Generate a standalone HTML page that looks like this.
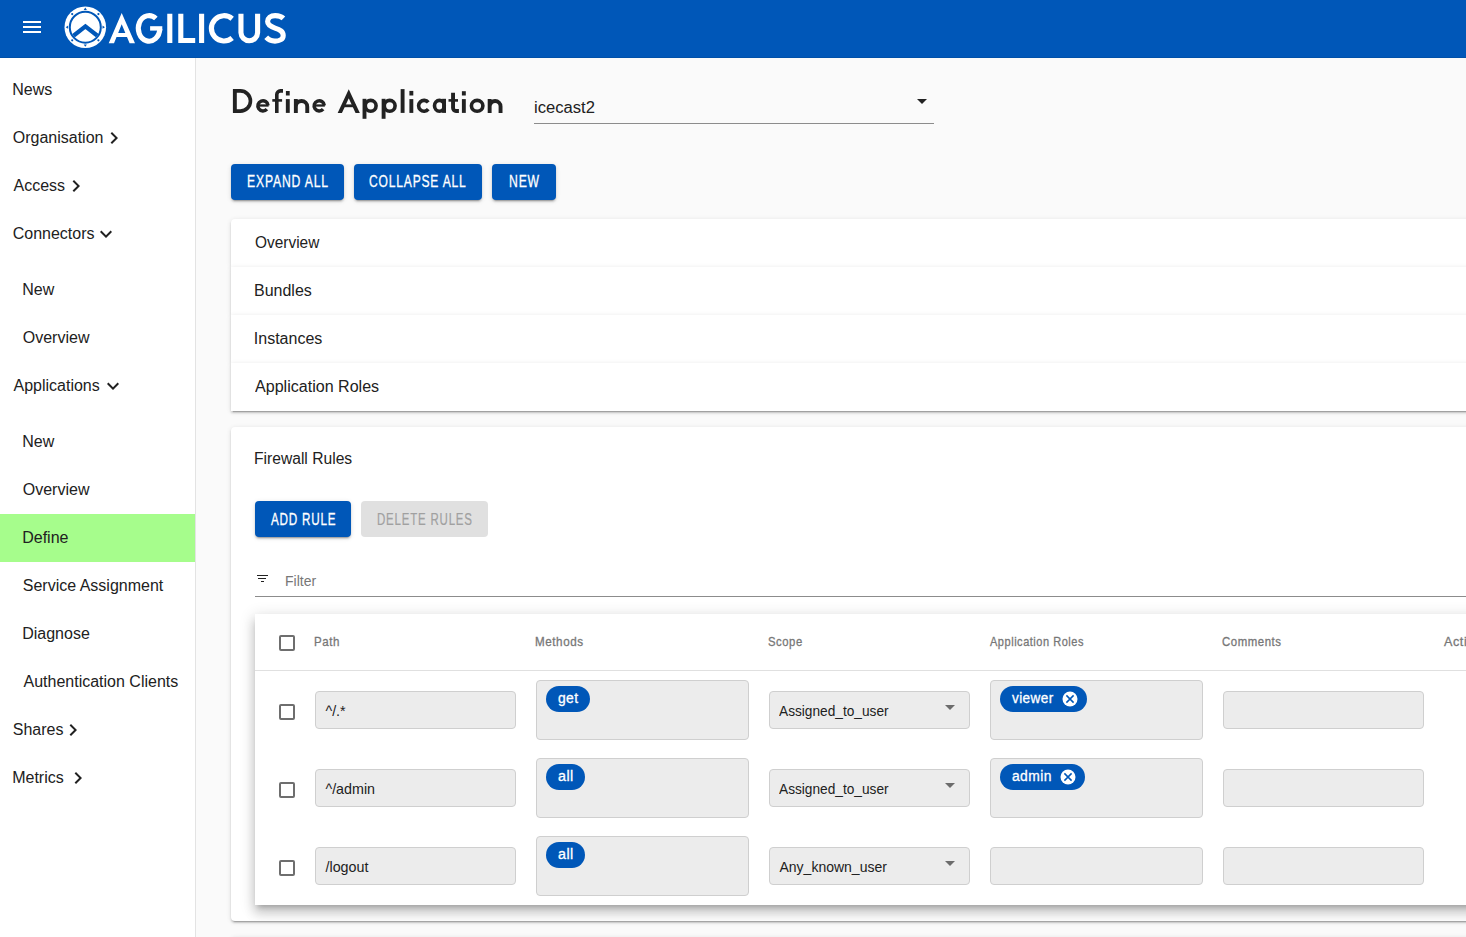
<!DOCTYPE html>
<html><head><meta charset="utf-8"><style>
html,body{margin:0;padding:0;width:1466px;height:937px;overflow:hidden;background:#fafafa;}
body{position:relative;font-family:"Liberation Sans",sans-serif;}
.t{position:absolute;line-height:1;white-space:nowrap;}
.r{position:absolute;box-sizing:border-box;}
svg{position:absolute;}
</style></head><body>
<div class="r" style="left:231px;top:219px;width:1300px;height:48px;background:#fff;border-radius:4px 4px 0 0;box-shadow:0 3px 1px -2px rgba(0,0,0,.2),0 2px 2px 0 rgba(0,0,0,.14),0 1px 5px 0 rgba(0,0,0,.12);"></div>
<div class="r" style="left:231px;top:267px;width:1300px;height:48px;background:#fff;box-shadow:0 3px 1px -2px rgba(0,0,0,.2),0 2px 2px 0 rgba(0,0,0,.14),0 1px 5px 0 rgba(0,0,0,.12);"></div>
<div class="r" style="left:231px;top:315px;width:1300px;height:48px;background:#fff;box-shadow:0 3px 1px -2px rgba(0,0,0,.2),0 2px 2px 0 rgba(0,0,0,.14),0 1px 5px 0 rgba(0,0,0,.12);"></div>
<div class="r" style="left:231px;top:363px;width:1300px;height:48px;background:#fff;box-shadow:0 3px 1px -2px rgba(0,0,0,.2),0 2px 2px 0 rgba(0,0,0,.14),0 1px 5px 0 rgba(0,0,0,.12);"></div>
<div class="r" style="left:231px;top:427px;width:1300px;height:494px;background:#fff;border-radius:4px;overflow:hidden;box-shadow:0 3px 1px -2px rgba(0,0,0,.2),0 2px 2px 0 rgba(0,0,0,.14),0 1px 5px 0 rgba(0,0,0,.12);">
<div class="r" style="left:24px;top:187px;width:1300px;height:291px;background:#fff;box-shadow:0 5px 5px -3px rgba(0,0,0,.2),0 8px 10px 1px rgba(0,0,0,.14),0 3px 14px 2px rgba(0,0,0,.12);"></div>
</div>
<div class="r" style="left:231px;top:937px;width:1300px;height:100px;background:#fff;border-radius:4px;box-shadow:0 3px 1px -2px rgba(0,0,0,.2),0 2px 2px 0 rgba(0,0,0,.14),0 1px 5px 0 rgba(0,0,0,.12);"></div>
<div class="r" style="left:0px;top:0px;width:1466px;height:58px;background:#0057b8;border-bottom:1px solid #0050a8;"></div>
<div class="r" style="left:23px;top:21px;width:18px;height:2px;background:#fff;"></div>
<div class="r" style="left:23px;top:26px;width:18px;height:2px;background:#fff;"></div>
<div class="r" style="left:23px;top:31px;width:18px;height:2px;background:#fff;"></div>
<svg style="left:0;top:0" width="300" height="58" viewBox="0 0 300 58">
<defs><clipPath id="ic"><circle cx="85.3" cy="27.2" r="14.6"/></clipPath>
<clipPath id="capc"><rect x="100" y="13.8" width="200" height="29.3"/></clipPath></defs>
<circle cx="85.3" cy="27.2" r="20.8" fill="#fff"/>
<circle cx="85.3" cy="27.2" r="15.5" fill="none" stroke="#0057b8" stroke-width="2"/>
<g clip-path="url(#ic)"><polyline points="60,46.3 85.4,26.4 110.8,46.3" fill="none" stroke="#0057b8" stroke-width="4.3" stroke-linejoin="miter"/></g>
<g fill="#0057b8">
<polygon points="83.7,10.0 86.9,10.0 85.3,7.6"/>
<polygon points="83.7,44.4 86.9,44.4 85.3,46.8"/>
<polygon points="68.1,25.6 68.1,28.8 65.7,27.2"/>
<polygon points="102.5,25.6 102.5,28.8 104.9,27.2"/>
<circle cx="72.2" cy="14.1" r="1.1"/><circle cx="98.4" cy="14.1" r="1.1"/>
<circle cx="72.2" cy="40.3" r="1.1"/><circle cx="98.4" cy="40.3" r="1.1"/>
</g>
<path d="M108.7,43.2 L121.7,13.1 L135,43.2 L129.6,43.2 L121.7,24.3 L114,43.2 Z M115,33 H128.5 L130.2,37 H113.3 Z" fill="#fff"/>
<g fill="none" stroke="#fff" stroke-width="5.1" clip-path="url(#capc)">
<path d="M169.8,13 V43.6"/>
<path d="M180.8,13 V40.65 H195.2"/>
<path d="M201.6,13 V43.6"/>
</g>
<g fill="none" stroke="#fff" stroke-width="5.1">
<path d="M155.85,18.48 A10.75,12.8 0 1 0 159.8,28.9"/><path d="M150.1,28.4 H162.3" stroke-width="4.4"/>
<path d="M232.18,18.66 A12.65,12.65 0 1 0 232.18,38.04" stroke-width="5.2"/>
<path d="M240.95,13.8 V32.7 A8.33,8.33 0 0 0 257.6,32.7 V13.8"/>
<path d="M283.4,18.4 C281.2,16.2 278.4,15.6 275.2,15.6 C270.6,15.6 267.6,18.2 267.6,21.6 C267.6,25.2 270.6,26.6 275,28.1 C279.8,29.7 283.2,31.2 283.2,35.4 C283.2,39.2 279.6,41.1 275,41.1 C271.2,41.1 268.4,39.8 266.2,37.3"/>
</g>
</svg>
<div class="r" style="left:0px;top:58px;width:196px;height:879px;background:#fff;border-right:1px solid #e3e3e3;"></div>
<div class="r" style="left:0px;top:514px;width:195px;height:48px;background:#a6fd8c;"></div>
<div class="t" style="left:12.19px;top:82.26px;font-size:16px;color:#212121;">News</div>
<div class="t" style="left:12.75px;top:130.26px;font-size:16px;color:#212121;">Organisation</div>
<svg style="position:absolute;left:102px;top:126px" width="24" height="24" viewBox="0 0 24 24"><path d="M10 6L8.59 7.41 13.17 12l-4.58 4.59L10 18l6-6z" fill="#212121"/></svg>
<div class="t" style="left:13.47px;top:178.26px;font-size:16px;color:#212121;">Access</div>
<svg style="position:absolute;left:64px;top:174px" width="24" height="24" viewBox="0 0 24 24"><path d="M10 6L8.59 7.41 13.17 12l-4.58 4.59L10 18l6-6z" fill="#212121"/></svg>
<div class="t" style="left:12.68px;top:226.26px;font-size:16px;color:#212121;">Connectors</div>
<svg style="position:absolute;left:94px;top:222px" width="24" height="24" viewBox="0 0 24 24"><path d="M16.59 8.59L12 13.17 7.41 8.59 6 10l6 6 6-6z" fill="#212121"/></svg>
<div class="t" style="left:22.19px;top:282.26px;font-size:16px;color:#212121;">New</div>
<div class="t" style="left:22.75px;top:330.26px;font-size:16px;color:#212121;">Overview</div>
<div class="t" style="left:13.47px;top:378.26px;font-size:16px;color:#212121;">Applications</div>
<svg style="position:absolute;left:101px;top:374px" width="24" height="24" viewBox="0 0 24 24"><path d="M16.59 8.59L12 13.17 7.41 8.59 6 10l6 6 6-6z" fill="#212121"/></svg>
<div class="t" style="left:22.19px;top:434.26px;font-size:16px;color:#212121;">New</div>
<div class="t" style="left:22.75px;top:482.26px;font-size:16px;color:#212121;">Overview</div>
<div class="t" style="left:22.19px;top:530.26px;font-size:16px;color:#212121;">Define</div>
<div class="t" style="left:22.78px;top:578.26px;font-size:16px;color:#212121;">Service Assignment</div>
<div class="t" style="left:22.19px;top:626.26px;font-size:16px;color:#212121;">Diagnose</div>
<div class="t" style="left:23.47px;top:674.26px;font-size:16px;color:#212121;">Authentication Clients</div>
<div class="t" style="left:12.78px;top:722.26px;font-size:16px;color:#212121;">Shares</div>
<svg style="position:absolute;left:60.5px;top:718px" width="24" height="24" viewBox="0 0 24 24"><path d="M10 6L8.59 7.41 13.17 12l-4.58 4.59L10 18l6-6z" fill="#212121"/></svg>
<div class="t" style="left:12.19px;top:770.26px;font-size:16px;color:#212121;">Metrics</div>
<svg style="position:absolute;left:65.5px;top:766px" width="24" height="24" viewBox="0 0 24 24"><path d="M10 6L8.59 7.41 13.17 12l-4.58 4.59L10 18l6-6z" fill="#212121"/></svg>
<svg style="left:220px;top:80px" width="300" height="45" viewBox="220 80 300 45">
<g fill="none" stroke="#222" stroke-width="3.9" stroke-linecap="butt">
<path d="M234.85,89.06 V112.9"/>
<path d="M233,90.9 H240.35 A10.1,10.1 0 0 1 240.35,111.1 H233" stroke-width="3.6"/>
<path d="M268.05,105.4 A5.1,5.1 0 1 0 266.86,109.18" stroke-width="3.5"/>
<path d="M257.5,105.5 H268.6" stroke-width="2.3"/>
<path d="M276.8,112.9 V94.5 A3.6,3.6 0 0 1 280.4,90.9 H283" stroke-width="3.6"/>
<path d="M272.3,100.4 H282.1" stroke-width="2.6"/>
<path d="M287.8,99.1 V112.9"/>
<path d="M295.85,99.1 V112.9 M295.85,106.7 A5.7,5.7 0 0 1 307.25,106.7 V112.9"/>
<path d="M324.3,105.4 A5.1,5.1 0 1 0 323.11,109.18" stroke-width="3.5"/>
<path d="M313.75,105.5 H324.85" stroke-width="2.3"/>
<defs><clipPath id="tA"><rect x="330" y="85" width="40" height="27.9"/></clipPath></defs><path clip-path="url(#tA)" d="M338.45,115.9 L348.75,93.75 L359.05,115.9" stroke-linejoin="miter"/>
<path d="M342,105.8 H355.5" stroke-width="2.8"/>
<path d="M364.5,98.8 V118.8"/>
<circle cx="370.7" cy="105.8" r="5.4" stroke-width="3.6"/>
<path d="M383.6,98.8 V118.8"/>
<circle cx="389.7" cy="105.8" r="5.4" stroke-width="3.6"/>
<path d="M402.6,89.1 V112.9"/>
<path d="M411.35,99.1 V112.9"/>
<path d="M428.26,102.48 A5.4,5.4 0 1 0 428.26,109.12" stroke-width="3.6"/>
<path d="M444.05,98.8 V112.9"/>
<ellipse cx="439.4" cy="105.8" rx="4.9" ry="5.4" stroke-width="3.6"/>
<path d="M453.05,92.7 V108.05 A2.9,2.9 0 0 0 455.95,110.95 H458.9"/>
<path d="M448.5,100.4 H458" stroke-width="2.6"/>
<path d="M463.85,99.1 V112.9"/>
<ellipse cx="477.15" cy="105.8" rx="5.75" ry="5.4" stroke-width="3.6"/>
<path d="M489.65,99.1 V112.9 M489.65,106.45 A5.45,5.45 0 0 1 500.55,106.45 V112.9"/>
</g>
<g fill="#222">
<rect x="285.9" y="91" width="3.8" height="4.5"/>
<rect x="409.4" y="90.9" width="3.9" height="4.6"/>
<rect x="461.9" y="91.2" width="3.9" height="4.3"/>
</g>
</svg>
<div class="t" style="left:534.09px;top:100.26px;font-size:16px;color:#212121;transform:scaleX(1.0384);transform-origin:0 0;">icecast2</div>
<div class="r" style="left:534px;top:123px;width:400px;height:1px;background:#8c8c8c;"></div>
<svg style="left:917px;top:99px" width="10" height="5" viewBox="0 0 10 5"><path d="M0 0L10 0 5 5z" fill="#222"/></svg>
<div class="r" style="left:231px;top:164px;width:113px;height:36px;background:#0057b8;border-radius:4px;box-shadow:0 3px 1px -2px rgba(0,0,0,.2),0 2px 2px 0 rgba(0,0,0,.14),0 1px 5px 0 rgba(0,0,0,.12);"></div>
<div class="t" style="left:246.70px;top:173.96px;font-size:16px;color:#fff;letter-spacing:1.1px;transform:scaleX(0.7603);transform-origin:0 0;-webkit-text-stroke:0.3px #fff;">EXPAND ALL</div>
<div class="r" style="left:354px;top:164px;width:128px;height:36px;background:#0057b8;border-radius:4px;box-shadow:0 3px 1px -2px rgba(0,0,0,.2),0 2px 2px 0 rgba(0,0,0,.14),0 1px 5px 0 rgba(0,0,0,.12);"></div>
<div class="t" style="left:369.39px;top:173.96px;font-size:16px;color:#fff;letter-spacing:1.1px;transform:scaleX(0.7527);transform-origin:0 0;-webkit-text-stroke:0.3px #fff;">COLLAPSE ALL</div>
<div class="r" style="left:492px;top:164px;width:64px;height:36px;background:#0057b8;border-radius:4px;box-shadow:0 3px 1px -2px rgba(0,0,0,.2),0 2px 2px 0 rgba(0,0,0,.14),0 1px 5px 0 rgba(0,0,0,.12);"></div>
<div class="t" style="left:508.70px;top:173.96px;font-size:16px;color:#fff;letter-spacing:1.1px;transform:scaleX(0.7624);transform-origin:0 0;-webkit-text-stroke:0.3px #fff;">NEW</div>
<div class="t" style="left:254.57px;top:234.66px;font-size:16px;color:#212121;transform:scaleX(0.9641);transform-origin:0 0;">Overview</div>
<div class="t" style="left:253.99px;top:283.36px;font-size:16px;color:#212121;">Bundles</div>
<div class="t" style="left:253.83px;top:331.36px;font-size:16px;color:#212121;">Instances</div>
<div class="t" style="left:255.27px;top:379.46px;font-size:16px;color:#212121;transform:scaleX(1.0039);transform-origin:0 0;">Application Roles</div>
<div class="t" style="left:254.42px;top:450.96px;font-size:16px;color:#212121;transform:scaleX(0.9769);transform-origin:0 0;">Firewall Rules</div>
<div class="r" style="left:255px;top:501px;width:96px;height:36px;background:#0057b8;border-radius:4px;box-shadow:0 3px 1px -2px rgba(0,0,0,.2),0 2px 2px 0 rgba(0,0,0,.14),0 1px 5px 0 rgba(0,0,0,.12);"></div>
<div class="t" style="left:270.58px;top:511.76px;font-size:16px;color:#fff;letter-spacing:1.1px;transform:scaleX(0.7293);transform-origin:0 0;-webkit-text-stroke:0.3px #fff;">ADD RULE</div>
<div class="r" style="left:361px;top:501px;width:127px;height:36px;background:#e0e0e0;border-radius:4px;"></div>
<div class="t" style="left:376.76px;top:511.76px;font-size:16px;color:#a0a0a0;letter-spacing:1.1px;transform:scaleX(0.7187);transform-origin:0 0;-webkit-text-stroke:0.2px #a0a0a0;">DELETE RULES</div>
<div class="r" style="left:256.5px;top:575px;width:11.5px;height:1px;background:#222;"></div>
<div class="r" style="left:258.3px;top:578px;width:8px;height:1px;background:#222;"></div>
<div class="r" style="left:261px;top:581px;width:2.7px;height:1px;background:#222;"></div>
<div class="t" style="left:284.85px;top:573.73px;font-size:14.5px;color:#777;transform:scaleX(0.9643);transform-origin:0 0;">Filter</div>
<div class="r" style="left:255px;top:596px;width:1300px;height:1px;background:#8c8c8c;"></div>
<div class="r" style="left:279px;top:635px;width:16px;height:16px;border:2px solid #6e6e6e;border-radius:2px;"></div>
<div class="t" style="left:314.35px;top:636.13px;font-size:12.6px;color:#777;letter-spacing:0.6px;transform:scaleX(0.9163);transform-origin:0 0;-webkit-text-stroke:0.3px #777;">Path</div>
<div class="t" style="left:535.14px;top:636.13px;font-size:12.6px;color:#777;letter-spacing:0.6px;transform:scaleX(0.9260);transform-origin:0 0;-webkit-text-stroke:0.3px #777;">Methods</div>
<div class="t" style="left:768.49px;top:636.13px;font-size:12.6px;color:#777;letter-spacing:0.6px;transform:scaleX(0.8973);transform-origin:0 0;-webkit-text-stroke:0.3px #777;">Scope</div>
<div class="t" style="left:990.08px;top:636.13px;font-size:12.6px;color:#777;letter-spacing:0.6px;transform:scaleX(0.8743);transform-origin:0 0;-webkit-text-stroke:0.3px #777;">Application Roles</div>
<div class="t" style="left:1222.42px;top:636.13px;font-size:12.6px;color:#777;letter-spacing:0.6px;transform:scaleX(0.9059);transform-origin:0 0;-webkit-text-stroke:0.3px #777;">Comments</div>
<div class="t" style="left:1443.97px;top:636.13px;font-size:12.6px;color:#777;letter-spacing:0.6px;-webkit-text-stroke:0.3px #777;">Actions</div>
<div class="r" style="left:255px;top:670px;width:1300px;height:1px;background:#e0e0e0;"></div>
<div class="r" style="left:279px;top:704px;width:16px;height:16px;border:2px solid #6e6e6e;border-radius:2px;"></div>
<div class="r" style="left:315px;top:691px;width:201px;height:38px;background:#ececec;border:1px solid #cfcfcf;border-radius:4px;"></div>
<div class="t" style="left:325.43px;top:704.10px;font-size:14.3px;color:#212121;">^/.*</div>
<div class="r" style="left:536px;top:680px;width:213px;height:60px;background:#ececec;border:1px solid #cfcfcf;border-radius:4px;"></div>
<div class="r" style="left:546px;top:686px;width:44px;height:26px;background:#0057b8;border-radius:13px;"></div>
<div class="t" style="left:558.02px;top:691.15px;font-size:14px;color:#fff;letter-spacing:0.4px;transform:scaleX(0.9911);transform-origin:0 0;-webkit-text-stroke:0.3px #fff;">get</div>
<div class="r" style="left:769px;top:691px;width:201px;height:38px;background:#ececec;border:1px solid #cfcfcf;border-radius:4px;"></div>
<div class="t" style="left:779.47px;top:704.15px;font-size:14px;color:#212121;transform:scaleX(0.9775);transform-origin:0 0;">Assigned_to_user</div>
<svg style="left:945px;top:705px" width="10" height="5" viewBox="0 0 10 5"><path d="M0 0L10 0 5 5z" fill="rgba(0,0,0,.54)"/></svg>
<div class="r" style="left:990px;top:680px;width:213px;height:60px;background:#ececec;border:1px solid #cfcfcf;border-radius:4px;"></div>
<div class="r" style="left:1000px;top:686px;width:87px;height:26px;background:#0057b8;border-radius:13px;"></div>
<div class="t" style="left:1012.06px;top:691.15px;font-size:14px;color:#fff;letter-spacing:0.4px;transform:scaleX(0.9693);transform-origin:0 0;-webkit-text-stroke:0.3px #fff;">viewer</div>
<svg style="left:1062.3px;top:691px" width="16" height="16" viewBox="0 0 16 16"><circle cx="8" cy="8" r="7.5" fill="#fff"/><path d="M4.4 4.4L11.6 11.6M11.6 4.4L4.4 11.6" stroke="#0057b8" stroke-width="1.5"/></svg>
<div class="r" style="left:1223px;top:691px;width:201px;height:38px;background:#ececec;border:1px solid #cfcfcf;border-radius:4px;"></div>
<div class="r" style="left:279px;top:782px;width:16px;height:16px;border:2px solid #6e6e6e;border-radius:2px;"></div>
<div class="r" style="left:315px;top:769px;width:201px;height:38px;background:#ececec;border:1px solid #cfcfcf;border-radius:4px;"></div>
<div class="t" style="left:325.43px;top:782.10px;font-size:14.3px;color:#212121;">^/admin</div>
<div class="r" style="left:536px;top:758px;width:213px;height:60px;background:#ececec;border:1px solid #cfcfcf;border-radius:4px;"></div>
<div class="r" style="left:546px;top:764px;width:38.5px;height:26px;background:#0057b8;border-radius:13px;"></div>
<div class="t" style="left:558.00px;top:769.15px;font-size:14px;color:#fff;letter-spacing:0.4px;transform:scaleX(1.0235);transform-origin:0 0;-webkit-text-stroke:0.3px #fff;">all</div>
<div class="r" style="left:769px;top:769px;width:201px;height:38px;background:#ececec;border:1px solid #cfcfcf;border-radius:4px;"></div>
<div class="t" style="left:779.47px;top:782.15px;font-size:14px;color:#212121;transform:scaleX(0.9775);transform-origin:0 0;">Assigned_to_user</div>
<svg style="left:945px;top:783px" width="10" height="5" viewBox="0 0 10 5"><path d="M0 0L10 0 5 5z" fill="rgba(0,0,0,.54)"/></svg>
<div class="r" style="left:990px;top:758px;width:213px;height:60px;background:#ececec;border:1px solid #cfcfcf;border-radius:4px;"></div>
<div class="r" style="left:1000px;top:764px;width:85px;height:26px;background:#0057b8;border-radius:13px;"></div>
<div class="t" style="left:1012.22px;top:769.15px;font-size:14px;color:#fff;letter-spacing:0.4px;transform:scaleX(0.9912);transform-origin:0 0;-webkit-text-stroke:0.3px #fff;">admin</div>
<svg style="left:1060.3px;top:769px" width="16" height="16" viewBox="0 0 16 16"><circle cx="8" cy="8" r="7.5" fill="#fff"/><path d="M4.4 4.4L11.6 11.6M11.6 4.4L4.4 11.6" stroke="#0057b8" stroke-width="1.5"/></svg>
<div class="r" style="left:1223px;top:769px;width:201px;height:38px;background:#ececec;border:1px solid #cfcfcf;border-radius:4px;"></div>
<div class="r" style="left:279px;top:860px;width:16px;height:16px;border:2px solid #6e6e6e;border-radius:2px;"></div>
<div class="r" style="left:315px;top:847px;width:201px;height:38px;background:#ececec;border:1px solid #cfcfcf;border-radius:4px;"></div>
<div class="t" style="left:325.50px;top:860.10px;font-size:14.3px;color:#212121;">/logout</div>
<div class="r" style="left:536px;top:836px;width:213px;height:60px;background:#ececec;border:1px solid #cfcfcf;border-radius:4px;"></div>
<div class="r" style="left:546px;top:842px;width:38.5px;height:26px;background:#0057b8;border-radius:13px;"></div>
<div class="t" style="left:558.00px;top:847.15px;font-size:14px;color:#fff;letter-spacing:0.4px;transform:scaleX(1.0235);transform-origin:0 0;-webkit-text-stroke:0.3px #fff;">all</div>
<div class="r" style="left:769px;top:847px;width:201px;height:38px;background:#ececec;border:1px solid #cfcfcf;border-radius:4px;"></div>
<div class="t" style="left:779.47px;top:860.15px;font-size:14px;color:#212121;">Any_known_user</div>
<svg style="left:945px;top:861px" width="10" height="5" viewBox="0 0 10 5"><path d="M0 0L10 0 5 5z" fill="rgba(0,0,0,.54)"/></svg>
<div class="r" style="left:990px;top:847px;width:213px;height:38px;background:#ececec;border:1px solid #cfcfcf;border-radius:4px;"></div>
<div class="r" style="left:1223px;top:847px;width:201px;height:38px;background:#ececec;border:1px solid #cfcfcf;border-radius:4px;"></div>
</body></html>
